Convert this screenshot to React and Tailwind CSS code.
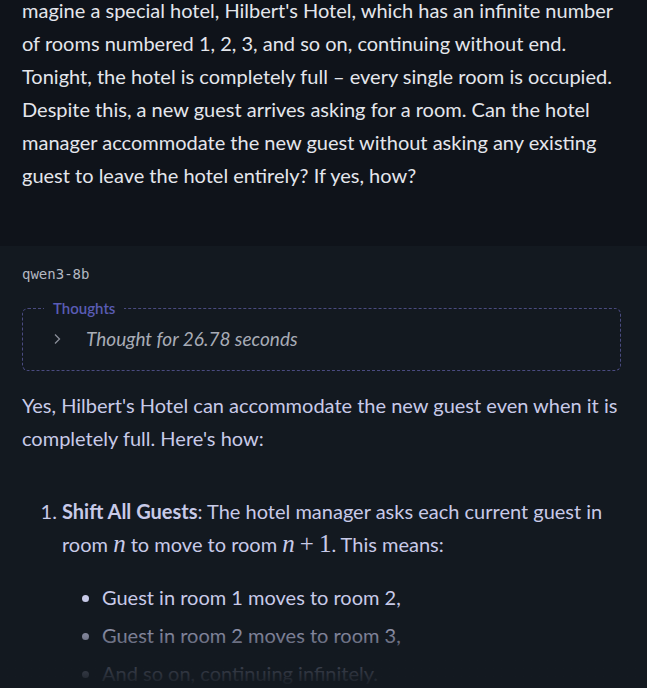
import React from "react";

const sans = { fontFamily: "Lato, 'Noto Sans', sans-serif" };
const math = { fontFamily: "'Liberation Serif', 'DejaVu Serif', serif" };

const App = () => {
  return (
    <div className="relative w-[647px] h-[688px] overflow-hidden bg-[#131920]" style={sans}>
      {/* user question */}
      <div className="bg-[#0f131a] pl-[22px] pr-[20px] h-[252px] -mt-[6px] text-[20px] leading-[33px] text-[#e4e6ec]">
        <p>
          magine a special hotel, Hilbert's Hotel, which has an infinite number of rooms
          numbered 1, 2, 3, and so on, continuing without end. Tonight, the hotel is
          completely full – every single room is occupied. Despite this, a new guest arrives
          asking for a room. Can the hotel manager accommodate the new guest without asking
          any existing guest to leave the hotel entirely? If yes, how?
        </p>
      </div>

      {/* assistant answer */}
      <div className="pl-[22px] pr-[26px] pt-[18px]">
        <div className="text-[14px] text-[#b4b8c2] leading-5" style={{ fontFamily: "'DejaVu Sans Mono', monospace" }}>
          qwen3-8b
        </div>

        <fieldset className="mt-[14px] border border-dashed border-[#4a4b80] rounded-[6px] pl-[29px] pr-[20px] pb-[17px] pt-0">
          <legend className="px-[9px] -ml-[8px] text-[15px] leading-5 text-[#5a5cb4] font-semibold">Thoughts</legend>
          <div className="flex items-center gap-[24px] mt-[7px]">
            <svg width="10" height="14" viewBox="0 0 10 14" className="text-[#8a8e99]">
              <path d="M3 2.5 L7.5 7 L3 11.5" fill="none" stroke="currentColor" strokeWidth="1.3" />
            </svg>
            <span className="italic text-[19px] leading-7 text-[#a8acb6]">Thought for 26.78 seconds</span>
          </div>
        </fieldset>

        <div className="text-[20px] leading-[33px] text-[#c8cae8]">
          <p className="mt-[18px]">
            Yes, Hilbert's Hotel can accommodate the new guest even when it is completely
            full. Here's how:
          </p>

          <ol className="mt-[40px] pl-[40px] list-decimal">
            <li>
              <strong className="font-bold">Shift All Guests</strong>: The hotel manager asks each
              current guest in room{" "}
              <span className="italic text-[25px] leading-none" style={math}>n</span>{" "}
              to move to room{" "}
              <span className="text-[25px] leading-none" style={math}>
                <span className="italic">n</span>
                <span className="mx-[5px]">+</span>1
              </span>
              . This means:
              <ul className="mt-[20px] pl-[40px] list-disc">
                <li className="mb-[5px]">Guest in room 1 moves to room 2,</li>
                <li className="mb-[5px]">Guest in room 2 moves to room 3,</li>
                <li>And so on, continuing infinitely.</li>
              </ul>
            </li>
          </ol>
        </div>
      </div>

      {/* bottom fade */}
      <div className="absolute left-0 right-0 bottom-0 h-[80px] bg-gradient-to-b from-transparent via-[#131920]/60 to-[#131920]" />
    </div>
  );
};

export default App;
